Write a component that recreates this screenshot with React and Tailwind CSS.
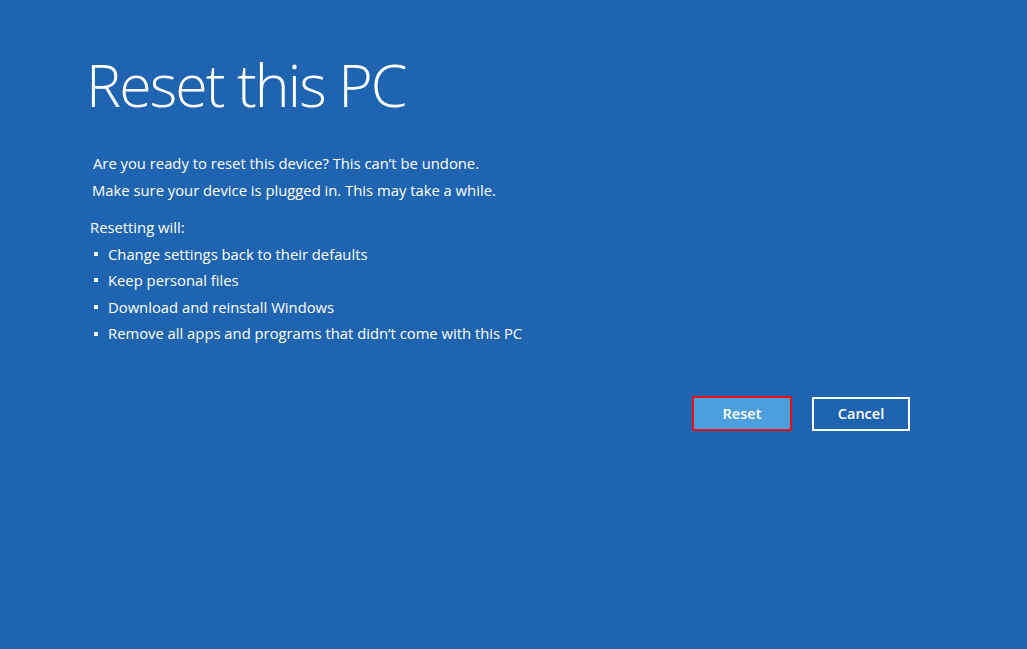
import React from 'react'

const items = [
  'Change settings back to their defaults',
  'Keep personal files',
  'Download and reinstall Windows',
  'Remove all apps and programs that didn\u2019t come with this PC',
]

const App = () => {
  return (
    <div
      className="w-[1027px] h-[649px] bg-[#1f64b1] text-white overflow-hidden"
      style={{ fontFamily: '"Open Sans", "Noto Sans", sans-serif' }}
    >
      <div className="pl-[86px] pt-[44px]">
        <h1 className="text-[59px] font-light leading-[80px] tracking-[-1.9px]">Reset this PC</h1>
      </div>

      {/* body */}
      <div className="pl-[93px] pt-[26px] text-[14.8px] leading-[27px]">
        <p>Are you ready to reset this device? This can’t be undone.</p>
        <p className="-ml-[1px]">Make sure your device is plugged in. This may take a while.</p>
      </div>

      <div className="pl-[90px] pt-[10px] text-[14.8px] leading-[26.6px]">
        <p>Resetting will:</p>
        <ul>
          {items.map((item) => (
            <li key={item} className="flex items-center">
              <span className="ml-[4px] w-[4px] h-[4px] bg-white mr-[10px]" />
              <span>{item}</span>
            </li>
          ))}
        </ul>
      </div>

      {/* buttons */}
      <div className="flex pl-[692px] pt-[49px] gap-[20px]">
        <button className="w-[100px] h-[35px] border-[2.5px] border-[#e81010] bg-[#4a9fdc] text-[14.5px] font-semibold">
          Reset
        </button>
        <button className="w-[98px] h-[34px] mt-[1px] border-2 border-white bg-[#1f64b1] text-[14.5px] font-semibold">
          Cancel
        </button>
      </div>
    </div>
  )
}

export default App
